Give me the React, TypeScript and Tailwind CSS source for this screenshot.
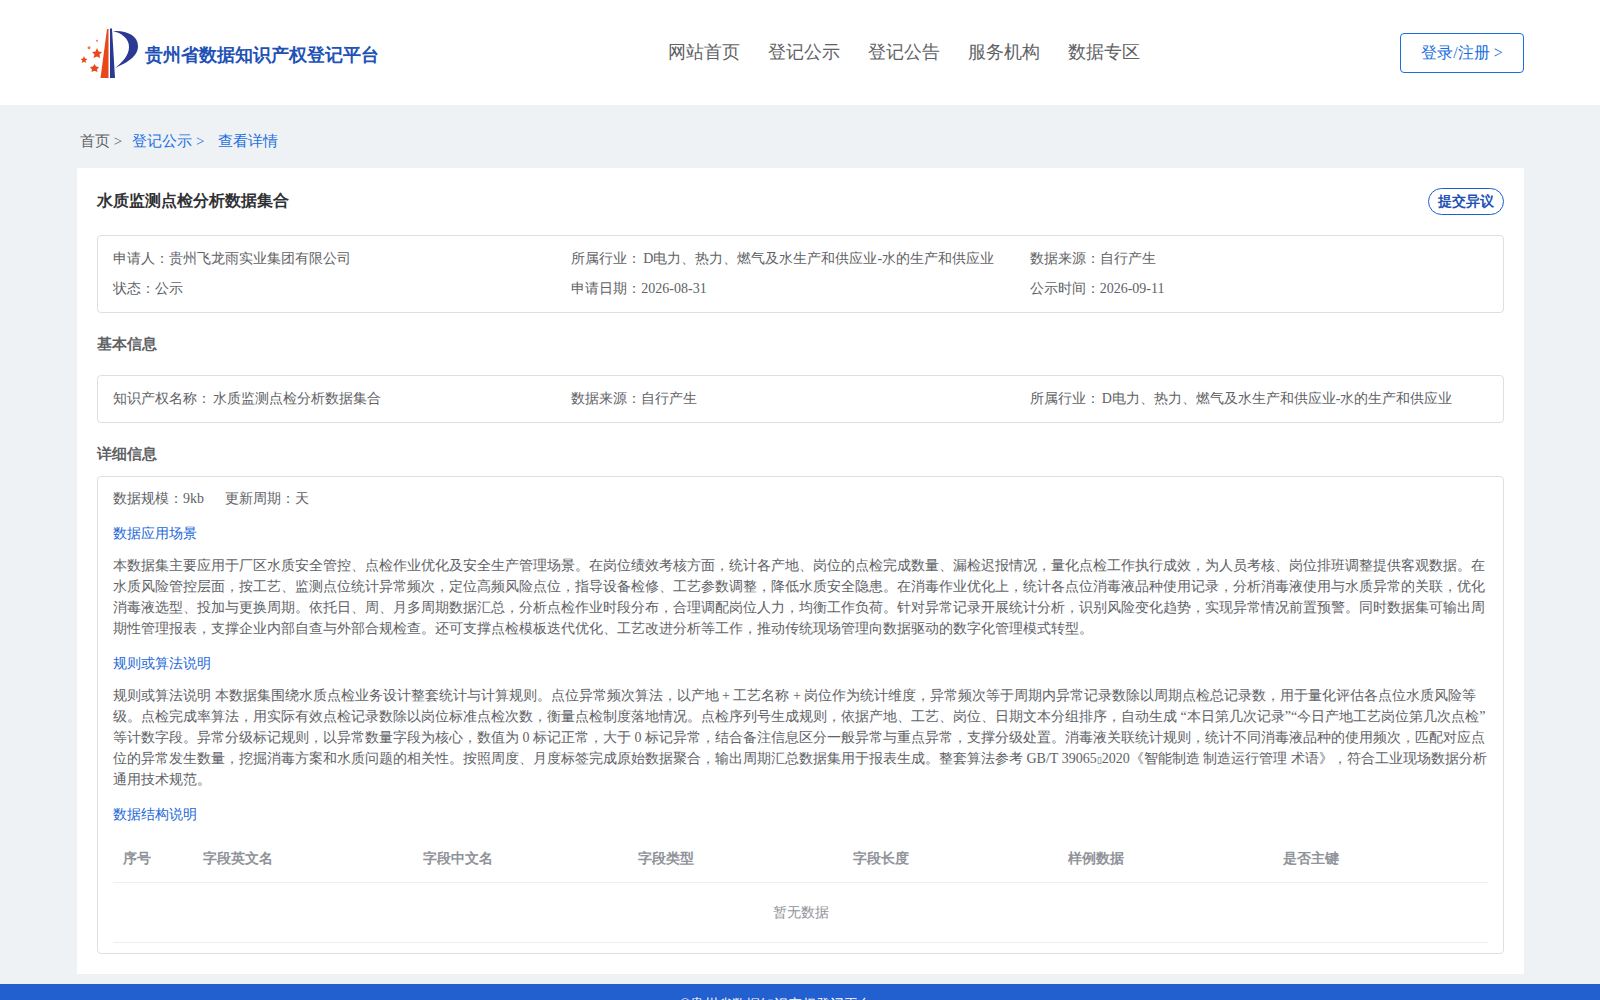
const logo = (
  <svg width="60" height="52" viewBox="80 28 60 52" className="shrink-0">
    <polygon points="107,29 108.500,29 108.500,78 100.500,78" fill="#e8481a" />
    <polygon points="110,28.500 112,28.500 115,78 110,78" fill="#2a3a92" />
    <path d="M113 31 C126 30 138 35 138 46 C138 57 126 63 115 68 C123 62 129 55 129 47 C129 38 121 33 113 31 Z" fill="#2a3a92" />
    <polygon points="97,48 98.500,51.500 102,52 99.500,54.500 100,58 97,56.500 93.500,58 94.500,54.500 92,52 95.500,51.500" fill="#e8481a" />
    <polygon points="84,56 85,58.500 87.500,59 85.500,60.500 86,63 84,61.700 81.500,63 82.500,60.500 80.500,59 83,58.500" fill="#e8481a" />
    <polygon points="94.500,64 96,66.500 99,67 97,69.500 97.500,72 94.500,70.800 91.500,72 92,69.500 90,67 93,66.500" fill="#e8481a" />
    <circle cx="89" cy="47.700" r="1.500" fill="#ee7a55" />
    <circle cx="97" cy="40.700" r="1" fill="#ee7a55" />
  </svg>
);

const F = "font-['Liberation_Serif',serif]";

function Cell({ children }: { children: React.ReactNode }) {
  return <div className="text-[14px] leading-[21px] text-[#606266]">{children}</div>;
}

const cols = [
  { t: "序号", w: "w-[80px]" },
  { t: "字段英文名", w: "w-[220px]" },
  { t: "字段中文名", w: "w-[215px]" },
  { t: "字段类型", w: "w-[215.25px]" },
  { t: "字段长度", w: "w-[215.25px]" },
  { t: "样例数据", w: "w-[215.25px]" },
  { t: "是否主键", w: "w-[215.25px]" },
];

export default function App() {
  return (
    <div className={`${F} h-[1000px] overflow-hidden bg-[#eff2f5]`}>
      <header className="h-[105px] bg-white pl-[80px] pr-[76px] flex items-center">
        <div className="w-[588px] flex items-center mt-[2px]">
          {logo}
          <span className="text-[18px] font-bold text-[#2251b5] ml-[5px] mt-[4px]">贵州省数据知识产权登记平台</span>
        </div>
        <nav className="flex gap-[28px] text-[18px] text-[#606266] leading-[27px]">
          <span>网站首页</span>
          <span>登记公示</span>
          <span>登记公告</span>
          <span>服务机构</span>
          <span>数据专区</span>
        </nav>
        <button className="ml-auto w-[124px] h-[40px] border border-[#1a6fe0] rounded-[4px] text-[16px] leading-[24px] pt-[1px] text-[#1a6fe0] bg-white">登录/注册 &gt;</button>
      </header>
      <div className="h-[63px] pl-[80px] flex items-center text-[15px] pt-[10px]">
        <span className="text-[#606266]">首页 &gt;</span>
        <span className="text-[#1a6fe0] ml-[10px]">登记公示 &gt;</span>
        <span className="text-[#1a6fe0] ml-[14px]">查看详情</span>
      </div>
      <main className="mx-[77px] w-[1447px] h-[806px] bg-white px-[20px] pt-[20px]">
        <div className="flex justify-between items-start h-[47px]">
          <h1 className="text-[16px] font-bold text-[#303133] leading-[25px]">水质监测点检分析数据集合</h1>
          <button className="w-[76px] h-[27px] border border-[#1a5fcf] rounded-[14px] text-[14px] font-bold text-[#2251b5] bg-white">提交异议</button>
        </div>
        <section className="border border-[#dcdfe6] rounded-[4px] h-[78px] px-[15px] pt-[12px] grid grid-cols-3 gap-y-[9px] content-start">
          <Cell>申请人：贵州飞龙雨实业集团有限公司</Cell>
          <Cell>所属行业：<span className="ml-[2px]">D电力、热力、燃气及水生产和供应业-水的生产和供应业</span></Cell>
          <Cell>数据来源：自行产生</Cell>
          <Cell>状态：公示</Cell>
          <Cell>申请日期：2026-08-31</Cell>
          <Cell>公示时间：2026-09-11</Cell>
        </section>
        <h2 className="text-[15px] font-bold text-[#606266] leading-[22px] mt-[20px] mb-[20px]">基本信息</h2>
        <section className="border border-[#dcdfe6] rounded-[4px] h-[48px] px-[15px] pt-[12px] grid grid-cols-3 content-start">
          <Cell>知识产权名称：<span className="ml-[2px]">水质监测点检分析数据集合</span></Cell>
          <Cell>数据来源：自行产生</Cell>
          <Cell>所属行业：<span className="ml-[2px]">D电力、热力、燃气及水生产和供应业-水的生产和供应业</span></Cell>
        </section>
        <h2 className="text-[15px] font-bold text-[#606266] leading-[22px] mt-[20px] mb-[11px]">详细信息</h2>
        <section className="border border-[#dcdfe6] rounded-[4px] h-[478px] px-[15px] pt-[11px] text-[14px] leading-[21px] text-[#606266]">
          <div className="flex gap-[21px]">
            <span>数据规模：9kb</span>
            <span>更新周期：天</span>
          </div>
          <div className="text-[#2368d8] mt-[14px]">数据应用场景</div>
          <p className="mt-[11px]">本数据集主要应用于厂区水质安全管控、点检作业优化及安全生产管理场景。在岗位绩效考核方面，统计各产地、岗位的点检完成数量、漏检迟报情况，量化点检工作执行成效，为人员考核、岗位排班调整提供客观数据。在水质风险管控层面，按工艺、监测点位统计异常频次，定位高频风险点位，指导设备检修、工艺参数调整，降低水质安全隐患。在消毒作业优化上，统计各点位消毒液品种使用记录，分析消毒液使用与水质异常的关联，优化消毒液选型、投加与更换周期。依托日、周、月多周期数据汇总，分析点检作业时段分布，合理调配岗位人力，均衡工作负荷。针对异常记录开展统计分析，识别风险变化趋势，实现异常情况前置预警。同时数据集可输出周期性管理报表，支撑企业内部自查与外部合规检查。还可支撑点检模板迭代优化、工艺改进分析等工作，推动传统现场管理向数据驱动的数字化管理模式转型。</p>
          <div className="text-[#2368d8] mt-[14px]">规则或算法说明</div>
          <p className="mt-[11px]">规则或算法说明 本数据集围绕水质点检业务设计整套统计与计算规则。点位异常频次算法，以产地 + 工艺名称 + 岗位作为统计维度，异常频次等于周期内异常记录数除以周期点检总记录数，用于量化评估各点位水质风险等级。点检完成率算法，用实际有效点检记录数除以岗位标准点检次数，衡量点检制度落地情况。点检序列号生成规则，依据产地、工艺、岗位、日期文本分组排序，自动生成 “本日第几次记录”“今日产地工艺岗位第几次点检” 等计数字段。异常分级标记规则，以异常数量字段为核心，数值为 0 标记正常，大于 0 标记异常，结合备注信息区分一般异常与重点异常，支撑分级处置。消毒液关联统计规则，统计不同消毒液品种的使用频次，匹配对应点位的异常发生数量，挖掘消毒方案和水质问题的相关性。按照周度、月度标签完成原始数据聚合，输出周期汇总数据集用于报表生成。整套算法参考 GB/T 39065<span className="text-[9px] leading-none">▯</span>2020《智能制造 制造运行管理 术语》，符合工业现场数据分析通用技术规范。</p>
          <div className="text-[#2368d8] mt-[14px]">数据结构说明</div>
          <div className="mt-[10px]">
            <div className="flex h-[48px] items-center border-b border-[#ebeef5] font-bold text-[#909399]">
              {cols.map((c) => (
                <div key={c.t} className={`${c.w} pl-[10px]`}>{c.t}</div>
              ))}
            </div>
            <div className="h-[60px] flex items-center justify-center border-b border-[#ebeef5] text-[#909399]">暂无数据</div>
          </div>
        </section>
      </main>
      <footer className="mt-[10px] bg-[#2260d0] h-[60px] text-center text-white text-[14px] leading-[21px] pt-[10px] pr-[48px]">©贵州省数据知识产权登记平台</footer>
    </div>
  );
}
